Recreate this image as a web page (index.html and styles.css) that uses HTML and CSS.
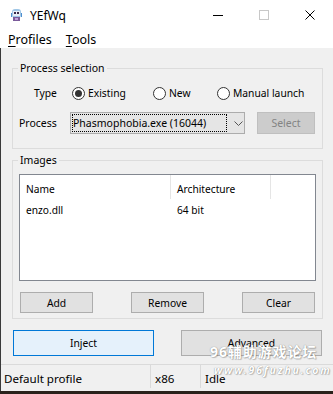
FILE: index.html
```html
<!DOCTYPE html>
<html lang="en">
<head>
  <meta charset="UTF-8" />
  <meta name="viewport" content="width=device-width, initial-scale=1" />
  <title>YEfWq</title>
  <link rel="stylesheet" href="styles.css">
</head>
<body>
  <div class="window">
    <div class="titlebar">
      <svg class="app-icon" width="13" height="14" viewBox="0 0 13 14">
        <rect x="2" y="1" width="9" height="9" rx="3" fill="#9fc6e6"/>
        <rect x="3" y="3" width="7" height="5" fill="#e8eef6"/>
        <rect x="4" y="4" width="2" height="2" fill="#3a2a4a"/>
        <rect x="7" y="4" width="2" height="2" fill="#3a2a4a"/>
        <rect x="3" y="9" width="7" height="4" fill="#7a5a9a"/>
        <rect x="5" y="10" width="3" height="2" fill="#c0a0d8"/>
        <rect x="1" y="5" width="1" height="4" fill="#4d8fd0"/>
        <rect x="11" y="5" width="1" height="4" fill="#4d8fd0"/>
      </svg>
      <span class="title">YEfWq</span>
      <div class="controls">
        <span class="ctl ctl-min"></span>
        <span class="ctl ctl-max"></span>
        <span class="ctl ctl-close">
          <svg width="10" height="10" viewBox="0 0 10 10"><path d="M0.5 0.5 L9.5 9.5 M9.5 0.5 L0.5 9.5" stroke="#000" stroke-width="1" fill="none"/></svg>
        </span>
      </div>
    </div>

    <div class="menubar">
      <span class="menu-item"><u>P</u>rofiles</span>
      <span class="menu-item"><u>T</u>ools</span>
    </div>

    <div class="client">
      <fieldset class="group group-process">
        <legend>Process selection</legend>
        <div class="row row-type">
          <span class="field-label label-type">Type</span>
          <label class="radio radio-existing"><span class="dot checked"></span>Existing</label>
          <label class="radio radio-new"><span class="dot"></span>New</label>
          <label class="radio"><span class="dot"></span>Manual launch</label>
        </div>
        <div class="row row-process">
          <span class="field-label label-process">Process</span>
          <div class="combo">
            <span class="combo-text">Phasmophobia.exe (16044)</span>
            <svg class="chevron" width="9" height="5" viewBox="0 0 9 5"><path d="M0.5 0.5 L4.5 4.5 L8.5 0.5" stroke="#555" fill="none"/></svg>
          </div>
          <button class="btn btn-disabled btn-select">Select</button>
        </div>
      </fieldset>

      <fieldset class="group group-images">
        <legend>Images</legend>
        <div class="listview">
          <div class="lv-header">
            <span class="col col-name">Name</span>
            <span class="col col-arch">Architecture</span>
          </div>
          <div class="lv-row">
            <span class="col col-name">enzo.dll</span>
            <span class="col col-arch">64 bit</span>
          </div>
        </div>
        <div class="list-buttons">
          <button class="btn">Add</button>
          <button class="btn">Remove</button>
          <button class="btn">Clear</button>
        </div>
      </fieldset>

      <div class="actions">
        <button class="btn btn-big btn-default">Inject</button>
        <button class="btn btn-big">Advanced</button>
      </div>

      <div class="statusbar">
        <span class="status status-profile">Default profile</span>
        <span class="status status-arch">x86</span>
        <span class="status status-state">Idle</span>
      </div>

      <div class="watermark">
        <div class="wm-name">96辅助游戏论坛</div>
        <div class="wm-url">www.96fuzhu.com</div>
      </div>
    </div>
    <div class="bottom-edge"></div>
  </div>
</body>
</html>
```

FILE: styles.css
```css
body {
  margin: 0;
  font-family: 'Noto Sans', 'Noto Sans CJK SC', sans-serif;
  font-size: 10.2px;
  color: #000;
  background: #f0f0f0;
}
.window {
  width: 333px;
  height: 394px;
  overflow: hidden;
  position: relative;
}
.titlebar {
  height: 30px;
  background: #fff;
  display: flex;
  align-items: center;
}
.app-icon {
  margin-left: 10px;
  margin-top: -1px;
}
.title {
  margin-left: 7px;
  font-size: 12px;
}
.controls {
  margin-left: auto;
  display: flex;
  height: 30px;
}
.ctl {
  width: 46px;
  height: 30px;
  display: flex;
  align-items: center;
  justify-content: center;
}
.ctl-min::before {
  content: "";
  width: 10px;
  height: 1px;
  background: #000;
}
.ctl-max::before {
  content: "";
  width: 8px;
  height: 8px;
  border: 1px solid #c8c8c8;
}
.menubar {
  height: 18px;
  background: #fff;
  display: flex;
  align-items: center;
  padding-left: 8px;
  gap: 14px;
  font-size: 12.5px;
}
.menu-item u {
  text-decoration-thickness: 1px;
  text-underline-offset: 2px;
}
.client {
  position: relative;
  height: 343px;
  background: #f0f0f0;
  border-left: 1px solid #3a3a3a;
  padding: 12px 10px 0 11px;
  box-sizing: border-box;
}
.group {
  margin: 0;
  padding: 0;
  border: 1px solid #dcdcdc;
  min-width: 0;
}
.group legend {
  margin-left: 5px;
  padding: 0 2px;
  line-height: 16px;
  font-size: 10.5px;
}
.group-process {
  height: 89px;
  box-sizing: border-box;
}
.group-images {
  margin-top: 3px;
  height: 167px;
  box-sizing: border-box;
}
.row {
  display: flex;
  align-items: center;
}
.row-type {
  height: 16px;
  margin-top: 9px;
  font-size: 10.3px;
}
.label-type {
  margin-left: 21px;
  width: 38px;
}
.radio {
  display: flex;
  align-items: center;
}
.radio-existing {
  width: 81px;
}
.radio-new {
  width: 64px;
}
.dot {
  width: 11px;
  height: 11px;
  border: 1px solid #333;
  border-radius: 50%;
  background: #fff;
  margin-right: 3px;
  position: relative;
}
.dot.checked::after {
  content: "";
  position: absolute;
  left: 2px;
  top: 2px;
  width: 7px;
  height: 7px;
  border-radius: 50%;
  background: #333;
}
.row-process {
  margin-top: 11px;
  height: 22px;
}
.label-process {
  margin-left: 6px;
  width: 51px;
  font-size: 10.5px;
}
.combo {
  width: 173px;
  height: 20px;
  border: 1px solid #acacac;
  background: #e5e5e5;
  display: flex;
  align-items: center;
  font-size: 10.5px;
}
.combo-text {
  margin-left: 1px;
  width: 155px;
  height: 18px;
  line-height: 18px;
  padding-left: 1px;
  box-sizing: border-box;
  outline: 1px dotted #000;
  outline-offset: -1px;
  white-space: nowrap;
  overflow: hidden;
}
.chevron {
  margin-left: 7px;
}
.btn {
  font-family: inherit;
  font-size: 10.3px;
  color: #000;
  background: #e1e1e1;
  border: 1px solid #adadad;
  padding: 0;
  box-sizing: border-box;
}
.btn-select {
  margin-left: 12px;
  width: 58px;
  height: 22px;
  font-size: 10.5px;
}
.btn-disabled {
  background: #cccccc;
  border-color: #bfbfbf;
  color: #838383;
}
.listview {
  margin: 6px 6px 0 6px;
  height: 107px;
  box-sizing: border-box;
  border: 1px solid #828790;
  background: #fff;
}
.lv-header {
  display: flex;
  height: 24px;
}
.lv-header .col {
  height: 24px;
  line-height: 29px;
  border-right: 1px solid #e5e5e5;
  box-sizing: border-box;
}
.lv-row {
  display: flex;
  height: 19px;
  line-height: 22px;
}
.col {
  padding-left: 6px;
  box-sizing: border-box;
}
.col-name {
  width: 151px;
}
.col-arch {
  width: 100px;
}
.list-buttons {
  display: flex;
  justify-content: space-between;
  margin: 11px 7px 0 7px;
}
.list-buttons .btn {
  width: 73px;
  height: 21px;
}
.actions {
  display: flex;
  justify-content: space-between;
  margin: 11px 1px 0 1px;
}
.btn-big {
  width: 141px;
  height: 26px;
}
.btn-default {
  background: #e5f1fb;
  border-color: #0078d7;
}
.statusbar {
  position: absolute;
  left: 0;
  right: 0;
  bottom: 3px;
  height: 23px;
  border-top: 1px solid #dadada;
  display: flex;
  font-size: 11.6px;
}
.status {
  height: 23px;
  line-height: 28px;
  padding-left: 3px;
  box-sizing: border-box;
}
.status-profile {
  width: 150px;
  border-right: 1px solid #dadada;
}
.status-arch {
  width: 50px;
  padding-left: 4px;
  border-right: 1px solid #dadada;
}
.status-state {
  padding-left: 4px;
}
.watermark {
  position: absolute;
  left: 209px;
  top: 296px;
  color: #fff;
  font-weight: bold;
  text-shadow: 0 0 1px #777, 1px 1px 1px rgba(0, 0, 0, 0.2);
  pointer-events: none;
}
.wm-name {
  font-size: 14px;
  letter-spacing: 0.9px;
  line-height: 16px;
}
.wm-url {
  margin-top: 4px;
  margin-left: 4px;
  font-size: 10.5px;
  font-style: italic;
  letter-spacing: 1.8px;
  line-height: 12px;
}
.bottom-edge {
  position: absolute;
  left: 0;
  right: 0;
  bottom: 0;
  height: 3px;
  background: #2a221c;
}
```
